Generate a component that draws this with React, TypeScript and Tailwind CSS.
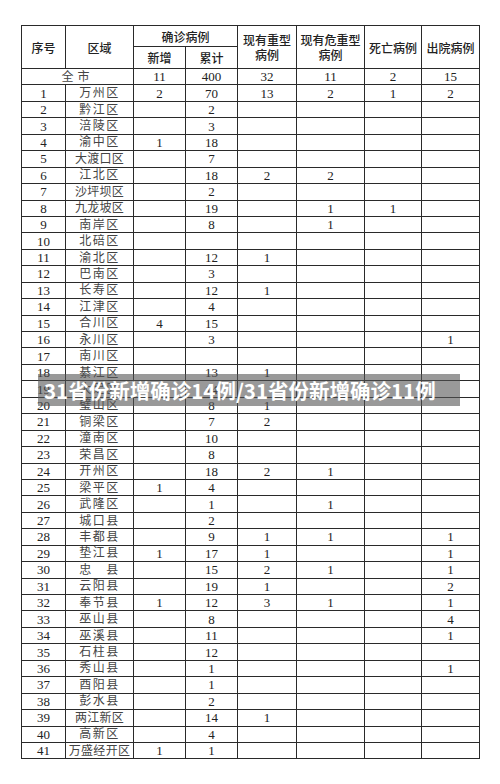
import React from 'react';

type Row = {
  no: string;
  name: string;
  add?: string;
  total?: string;
  severe?: string;
  critical?: string;
  dead?: string;
  cured?: string;
};

const rows: Row[] = [
  { no: '1', name: '万州区', add: '2', total: '70', severe: '13', critical: '2', dead: '1', cured: '2' },
  { no: '2', name: '黔江区', total: '2' },
  { no: '3', name: '涪陵区', total: '3' },
  { no: '4', name: '渝中区', add: '1', total: '18' },
  { no: '5', name: '大渡口区', total: '7' },
  { no: '6', name: '江北区', total: '18', severe: '2', critical: '2' },
  { no: '7', name: '沙坪坝区', total: '2' },
  { no: '8', name: '九龙坡区', total: '19', critical: '1', dead: '1' },
  { no: '9', name: '南岸区', total: '8', critical: '1' },
  { no: '10', name: '北碚区' },
  { no: '11', name: '渝北区', total: '12', severe: '1' },
  { no: '12', name: '巴南区', total: '3' },
  { no: '13', name: '长寿区', total: '12', severe: '1' },
  { no: '14', name: '江津区', total: '4' },
  { no: '15', name: '合川区', add: '4', total: '15' },
  { no: '16', name: '永川区', total: '3', cured: '1' },
  { no: '17', name: '南川区' },
  { no: '18', name: '綦江区', total: '13', severe: '1' },
  { no: '19', name: '大足区', total: '14' },
  { no: '20', name: '璧山区', total: '8', severe: '1' },
  { no: '21', name: '铜梁区', total: '7', severe: '2' },
  { no: '22', name: '潼南区', total: '10' },
  { no: '23', name: '荣昌区', total: '8' },
  { no: '24', name: '开州区', total: '18', severe: '2', critical: '1' },
  { no: '25', name: '梁平区', add: '1', total: '4' },
  { no: '26', name: '武隆区', total: '1', critical: '1' },
  { no: '27', name: '城口县', total: '2' },
  { no: '28', name: '丰都县', total: '9', severe: '1', critical: '1', cured: '1' },
  { no: '29', name: '垫江县', add: '1', total: '17', severe: '1', cured: '1' },
  { no: '30', name: '忠\u3000县', total: '15', severe: '2', critical: '1', cured: '1' },
  { no: '31', name: '云阳县', total: '19', severe: '1', cured: '2' },
  { no: '32', name: '奉节县', add: '1', total: '12', severe: '3', critical: '1', cured: '1' },
  { no: '33', name: '巫山县', total: '8', cured: '4' },
  { no: '34', name: '巫溪县', total: '11', cured: '1' },
  { no: '35', name: '石柱县', total: '12' },
  { no: '36', name: '秀山县', total: '1', cured: '1' },
  { no: '37', name: '酉阳县', total: '1' },
  { no: '38', name: '彭水县', total: '2' },
  { no: '39', name: '两江新区', total: '14', severe: '1' },
  { no: '40', name: '高新区', total: '4' },
  { no: '41', name: '万盛经开区', add: '1', total: '1' },
];

const cell = 'border border-[#2a2a2a] p-0 text-center align-middle';
const head = `${cell} text-[12px] font-medium text-[#222] leading-[15px]`;
const num = `${cell} text-[13px] text-[#222] leading-none`;

export default function App() {
  return (
    <div className="relative h-[784px] w-[500px] overflow-hidden bg-white pl-[21px] pt-[25px]">
      <table className="w-[458px] table-fixed border-collapse">
        <colgroup>
          <col className="w-[44px]" />
          <col className="w-[68px]" />
          <col className="w-[52px]" />
          <col className="w-[52px]" />
          <col className="w-[59px]" />
          <col className="w-[68px]" />
          <col className="w-[57px]" />
          <col className="w-[58px]" />
        </colgroup>
        <thead className="font-['Noto_Sans_CJK_SC',sans-serif]">
          <tr className="h-[21px]">
            <th rowSpan={2} className={head}>序号</th>
            <th rowSpan={2} className={head}>区域</th>
            <th colSpan={2} className={head}>确诊病例</th>
            <th rowSpan={2} className={head}>现有重型<br />病例</th>
            <th rowSpan={2} className={head}>现有危重型<br />病例</th>
            <th rowSpan={2} className={head}>死亡病例</th>
            <th rowSpan={2} className={head}>出院病例</th>
          </tr>
          <tr className="h-[22px]">
            <th className={head}>新增</th>
            <th className={head}>累计</th>
          </tr>
        </thead>
        <tbody className="font-['Liberation_Serif','Noto_Sans_CJK_SC',serif]">
          <tr className="h-[16.45px]">
            <td colSpan={2} className={`${cell} text-[12px] tracking-[4px] text-[#444] leading-none`}>全市</td>
            <td className={num}>11</td>
            <td className={num}>400</td>
            <td className={num}>32</td>
            <td className={num}>11</td>
            <td className={num}>2</td>
            <td className={num}>15</td>
          </tr>
          {rows.map((r) => (
            <tr key={r.no} className="h-[16.45px]">
              <td className={num}>{r.no}</td>
              <td
                className={`${cell} text-[12px] leading-none text-[#444] ${
                  r.name.length === 3 ? 'tracking-[1.5px]' : 'tracking-[0.3px]'
                }`}
              >
                {r.name}
              </td>
              <td className={num}>{r.add}</td>
              <td className={num}>{r.total}</td>
              <td className={num}>{r.severe}</td>
              <td className={num}>{r.critical}</td>
              <td className={num}>{r.dead}</td>
              <td className={num}>{r.cured}</td>
            </tr>
          ))}
        </tbody>
      </table>

      {/* caption banner over the table */}
      <div className="absolute left-[38px] top-[374px] flex h-[32px] w-[422px] items-center bg-[rgba(85,85,85,0.6)] pl-[6px]">
        <span className="font-['Noto_Sans_CJK_SC',sans-serif] text-[20.5px] font-bold leading-none text-white">
          31省份新增确诊14例/31省份新增确诊11例
        </span>
      </div>
    </div>
  );
}
